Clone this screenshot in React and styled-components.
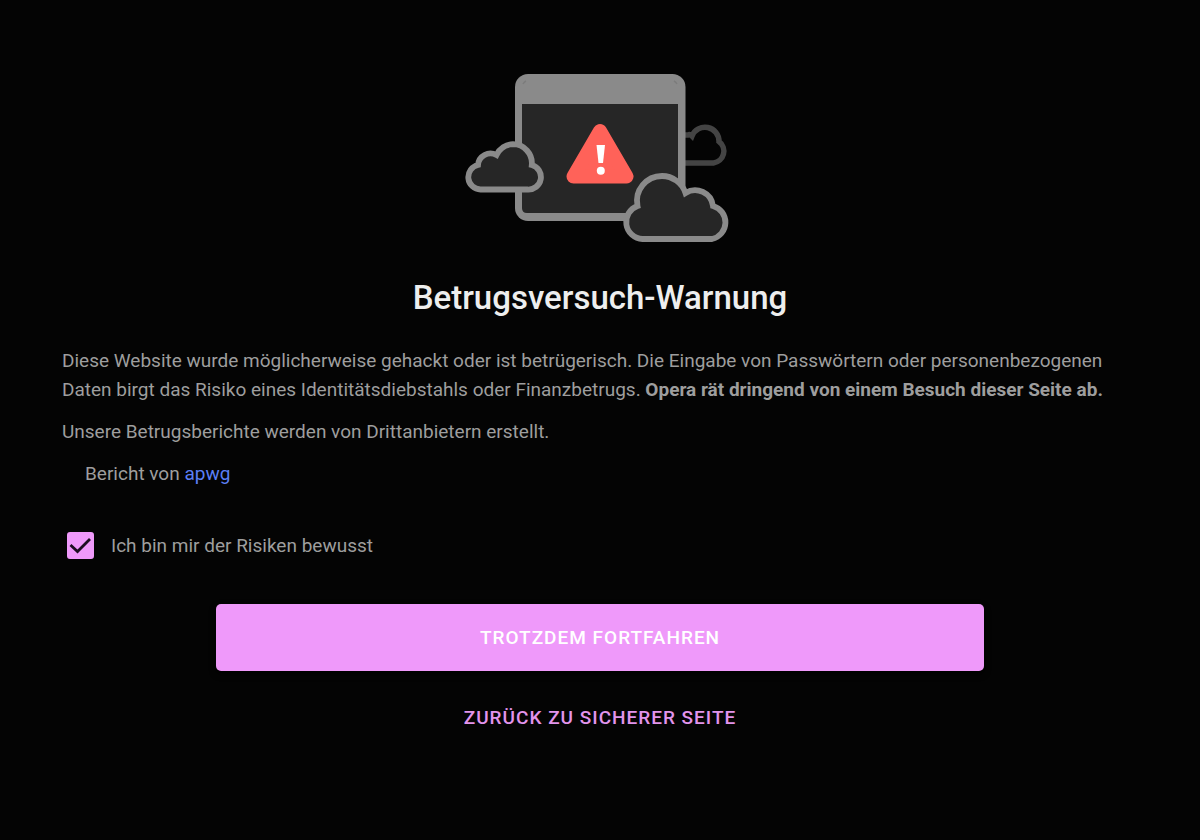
import { useState } from "react";
import styled, { createGlobalStyle } from "styled-components";

const GlobalStyle = createGlobalStyle`
    * {
        box-sizing: border-box;
    }
    body {
        margin: 0;
        background: #040404;
        color: #9e9e9e;
        font-family: Roboto, "Liberation Sans", sans-serif;
        font-size: 19px;
        line-height: 29px;
    }
`;

const Page = styled.main`
    display: flex;
    flex-direction: column;
    padding: 70px 62px;
`;

const Picture = styled.svg`
    width: 280px;
    height: 175px;
    align-self: center;
`;

const Title = styled.h1`
    margin: 32px 0 27px;
    color: #eeeeee;
    font-size: 33px;
    font-weight: 500;
    line-height: 42px;
    text-align: center;
`;

const Text = styled.p`
    margin: 0 0 13px;
    padding-left: ${(props) => (props.$indent ? "23px" : "0")};
`;

const Link = styled.a`
    color: #5b7ff5;
    text-decoration: none;
`;

const RiskLabel = styled.label`
    display: flex;
    align-items: center;
    align-self: flex-start;
    gap: 17px;
    margin: 30px 0 44px 5px;
    cursor: pointer;
`;

const BoxWrapper = styled.span`
    display: grid;
    width: 27px;
    height: 27px;

    > * {
        grid-area: 1 / 1;
    }
`;

const Checkbox = styled.input`
    appearance: none;
    width: 27px;
    height: 27px;
    margin: 0;
    border: 2px solid #ef99fa;
    border-radius: 3px;
    cursor: pointer;

    &:checked {
        background: #ef99fa;
    }
`;

const Tick = styled.svg`
    width: 27px;
    height: 27px;
    pointer-events: none;
`;

const Actions = styled.div`
    display: flex;
    flex-direction: column;
    align-items: center;
    gap: 24px;
`;

const Button = styled.button`
    padding: 0 16px;
    border: 0;
    border-radius: 5px;
    background: transparent;
    color: #e294ec;
    font-family: inherit;
    font-size: 19px;
    font-weight: 500;
    line-height: 46px;
    letter-spacing: 1px;
    text-transform: uppercase;
    cursor: pointer;
`;

const PrimaryButton = styled(Button)`
    width: 768px;
    max-width: 100%;
    background: #ef99fa;
    color: #ffffff;
    line-height: 67px;
    box-shadow: 0 3px 6px #000000;
`;

const WarningPicture = () => (
    <Picture viewBox="0 0 280 175" aria-hidden="true">
        <path
            d="M222 65H228Q230 64 232 66A14 14 0 0 1 259 71.5A12 12 0 0 1 253.5 93H222"
            fill="none"
            stroke="#444444"
            strokeWidth="5.5"
        />
        <rect x="55" y="4" width="170.5" height="147" rx="13" fill="#8a8a8a" />
        <path d="M62 34H218V143H67Q62 143 62 138Z" fill="#262626" />
        <path d="M63 14Q64 12 66 11M217 14Q216 12 214 11" fill="none" stroke="#7c7c7c" strokeWidth="1.5" />
        <path d="M140 61L166.5 106.5H113.5Z" fill="#ff6259" stroke="#ff6259" strokeWidth="14" strokeLinejoin="round" />
        <path d="M136.5 75H145L143 93H138.5Z" fill="#ffffff" />
        <circle cx="140.8" cy="100.7" r="4" fill="#ffffff" />
        <g fill="#262626" stroke="#8a8a8a" strokeWidth="5.8">
            <path d="M20.5 119.5A12.4 12.4 0 0 1 18 95A12.5 12.5 0 0 1 36.5 85A19 19 0 0 1 53 74.2A19 19 0 0 1 71.8 95A12.5 12.5 0 0 1 67.5 119.5Z" />
            <path d="M182.5 169A17 17 0 0 1 177.5 136A25 25 0 0 1 202 106A25 25 0 0 1 225.5 123A18 18 0 0 1 253 136A17 17 0 0 1 252 169Z" />
        </g>
    </Picture>
);

const App = () => {
    const [aware, setAware] = useState(true);

    return (
        <Page>
            <GlobalStyle />
            <WarningPicture />
            <Title>Betrugsversuch-Warnung</Title>
            <Text>
                Diese Website wurde möglicherweise gehackt oder ist betrügerisch. Die Eingabe von Passwörtern oder
                personenbezogenen Daten birgt das Risiko eines Identitätsdiebstahls oder Finanzbetrugs.{" "}
                <b>Opera rät dringend von einem Besuch dieser Seite ab.</b>
            </Text>
            <Text>Unsere Betrugsberichte werden von Drittanbietern erstellt.</Text>
            <Text $indent>
                Bericht von <Link href="#apwg">apwg</Link>
            </Text>
            <RiskLabel>
                <BoxWrapper>
                    <Checkbox type="checkbox" checked={aware} onChange={(e) => setAware(e.target.checked)} />
                    {aware && (
                        <Tick viewBox="0 0 27 27" aria-hidden="true">
                            <path d="M3.5 13L10.5 19.5L23 7" fill="none" stroke="#1c0d20" strokeWidth="2.8" />
                        </Tick>
                    )}
                </BoxWrapper>
                Ich bin mir der Risiken bewusst
            </RiskLabel>
            <Actions>
                <PrimaryButton type="button" disabled={!aware}>Trotzdem fortfahren</PrimaryButton>
                <Button type="button">Zurück zu sicherer Seite</Button>
            </Actions>
        </Page>
    );
};

export default App;
